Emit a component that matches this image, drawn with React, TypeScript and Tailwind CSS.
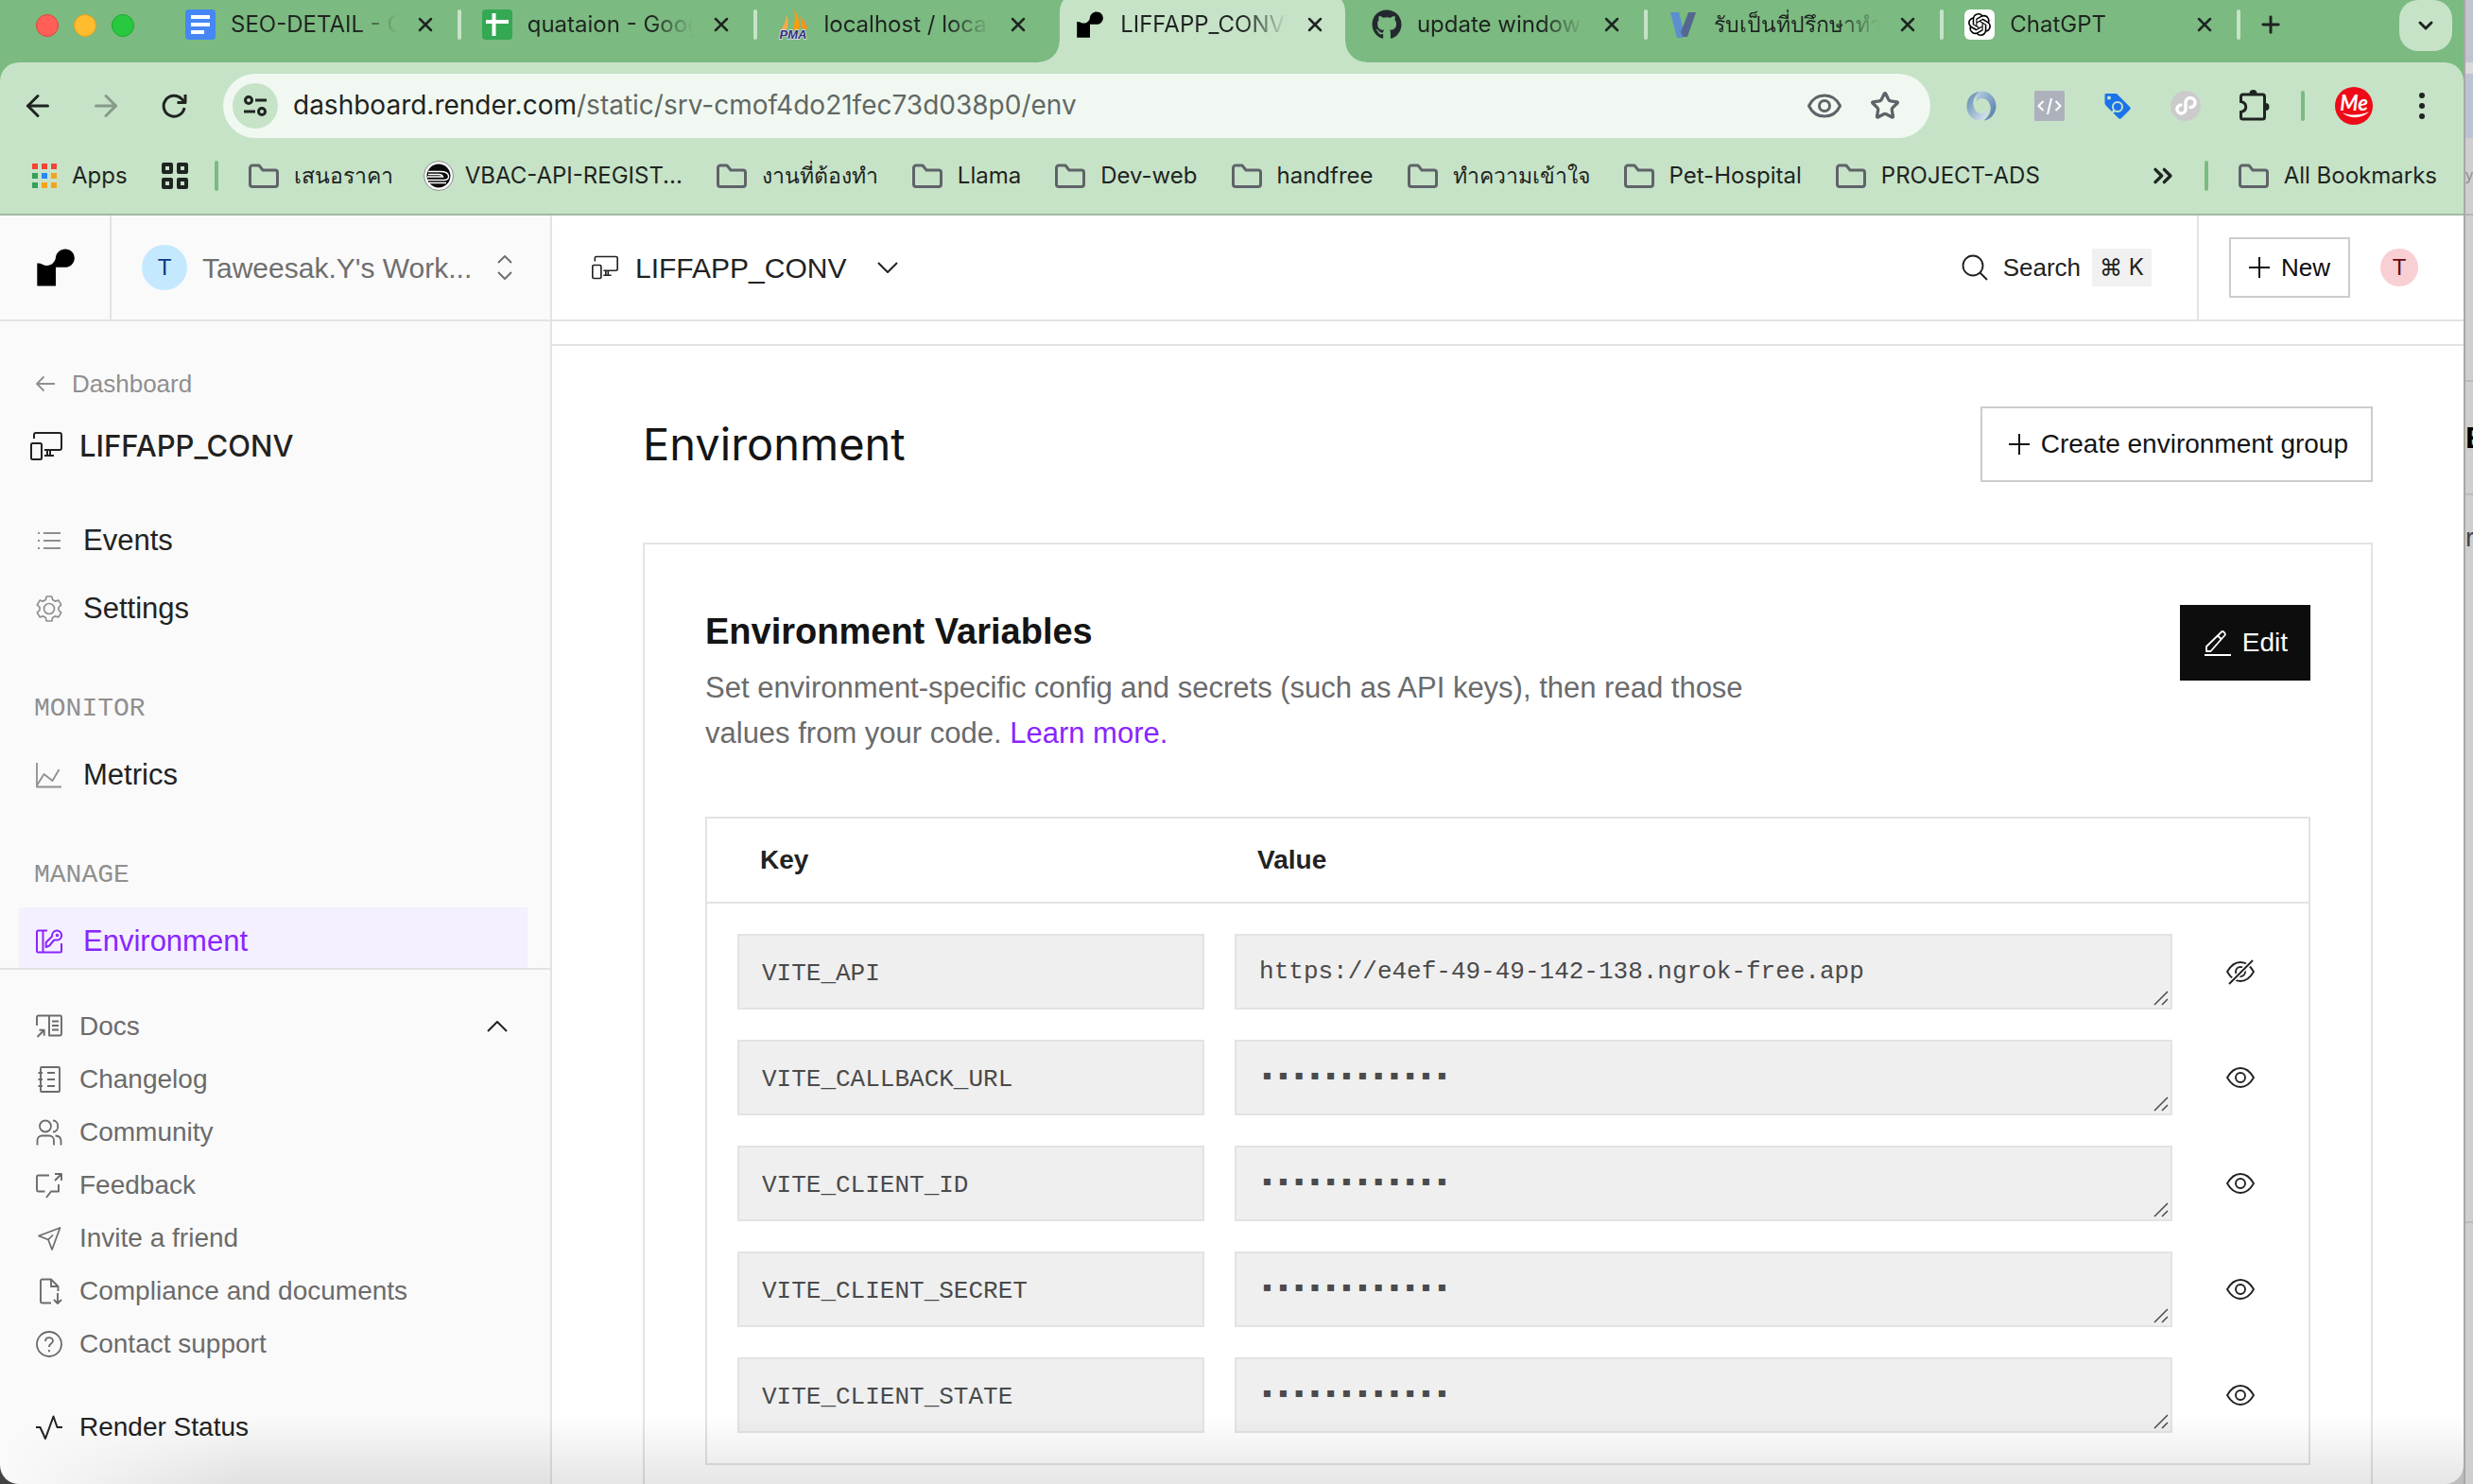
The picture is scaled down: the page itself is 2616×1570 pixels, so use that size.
import React from "react";
import {
  ArrowLeft,
  ArrowRight,
  ChevronDown,
  ChevronsRight,
  Plus,
  Star,
  X,
} from "lucide-react";
import { FaGithub } from "react-icons/fa";
import { SiOpenai } from "react-icons/si";

type IconProps = { className?: string };

function Line({
  className = "size-7",
  box = "0 0 24 24",
  width = 1.5,
  children,
}: {
  className?: string;
  box?: string;
  width?: number;
  children: React.ReactNode;
}) {
  return (
    <svg
      viewBox={box}
      className={className}
      fill="none"
      stroke="currentColor"
      strokeWidth={width}
      strokeLinejoin="round"
      aria-hidden="true"
    >
      {children}
    </svg>
  );
}

/* ---------- Browser icons ---------- */

function RenderLogo({ className }: IconProps) {
  return (
    <svg viewBox="0 0 40 40" className={className} fill="currentColor" aria-hidden="true">
      <path d="M30 0.6c-5.100 0-9.300 3.600-10 8.500-.1.400-.1.800-.2 1.200C19 14.700 15.200 18 10.600 18c-1.700 0-3.200-.4-4.600-1.200-1.500-.8-3.100-1.200-4.600-1.200H.3V39.500h19.700V19.800h9.800c5.600 0 10-4.500 10-9.900C39.800 4.700 35.400.6 30 .6z" />
    </svg>
  );
}

function DocsFavicon() {
  return (
    <svg viewBox="0 0 32 32" className="size-8 shrink-0" aria-hidden="true">
      <rect width="32" height="32" rx="4" fill="#4587f4" />
      <path d="M6 8h20M6 16h20M6 24h14" stroke="#fff" strokeWidth="4" />
    </svg>
  );
}

function SheetsFavicon() {
  return (
    <svg viewBox="0 0 32 32" className="size-8 shrink-0" aria-hidden="true">
      <rect width="32" height="32" rx="4" fill="#34a853" />
      <path d="M4 13h24M12.500 4v24" stroke="#fff" strokeWidth="4" />
    </svg>
  );
}

function PmaFavicon() {
  return (
    <svg viewBox="0 0 32 32" className="size-8 shrink-0" aria-hidden="true">
      <path d="M17 0c5 7 6 14 5.500 21l-7 1c2.500-7 3-14 1.500-22z" fill="#f89c0e" />
      <path d="M23 7c5 5 8 10 8 14l-7-1c1-5 .5-9-1-13z" fill="#f8931d" />
      <path d="M9 6c2.500 6 2 11 0 16l-7 1C6 18 8.500 12 9 6z" fill="#f9a94a" />
      <text
        x="16"
        y="31"
        textAnchor="middle"
        fontSize="13"
        fontWeight="700"
        fontStyle="italic"
        fontFamily="Liberation Sans, sans-serif"
        fill="#33307a"
        stroke="#dfe0ea"
        strokeWidth="1.500"
        paintOrder="stroke"
      >
        PMA
      </text>
    </svg>
  );
}

function VFavicon() {
  return (
    <svg viewBox="0 0 32 32" className="size-8 shrink-0" aria-hidden="true">
      <path d="M2 3h9l6 24-2 3H9z" fill="#5b8fd0" />
      <path d="M21 3h8l-9 26h-5l-2-5z" fill="#54688f" />
    </svg>
  );
}

function ChatFavicon() {
  return (
    <span className="flex size-8 shrink-0 items-center justify-center rounded-md bg-white">
      <SiOpenai className="size-6 text-black" />
    </span>
  );
}

function Folder() {
  return (
    <Line className="size-8 shrink-0 text-[#5f6368]" box="0 0 32 32" width={3}>
      <path d="M1.500 7.500a2.500 2.500 0 0 1 2.500-2.500h7l4 5h13a2.500 2.500 0 0 1 2.500 2.500v12.500a2.500 2.500 0 0 1-2.500 2.500H4a2.500 2.500 0 0 1-2.500-2.500z" />
    </Line>
  );
}

function ChromeEye() {
  return (
    <Line className="size-9 text-[#5f6368]" box="0 0 36 36" width={3}>
      <path d="M1.500 18C5 10.500 11 7 18 7s13 3.500 16.500 11C31 25.500 25 29 18 29S5 25.500 1.500 18z" />
      <circle cx="18" cy="18" r="5.500" />
    </Line>
  );
}

function AppsGrid() {
  const dots: [number, number, string][] = [
    [0, 0, "#f44336"], [10, 0, "#f44336"], [20, 0, "#f44336"],
    [0, 10, "#34a05a"], [10, 10, "#2a86f0"], [20, 10, "#f5a31a"],
    [0, 20, "#34a05a"], [10, 20, "#f5a31a"], [20, 20, "#f5a31a"],
  ];
  return (
    <svg viewBox="0 0 26 26" className="size-[26px] shrink-0" aria-hidden="true">
      {dots.map(([x, y, fill]) => (
        <rect key={`${x}-${y}`} x={x} y={y} width="6" height="6" fill={fill} />
      ))}
    </svg>
  );
}

function TrainIcon() {
  return (
    <svg viewBox="0 0 32 32" className="-mx-1 size-8 shrink-0" aria-hidden="true">
      <circle cx="16" cy="16" r="15.500" fill="#fff" stroke="#8a8a8a" />
      <circle cx="16" cy="16" r="12.500" fill="#0a0a0a" />
      <path d="M5 11.500h13c5 0 8 2 8.500 4.500S25 20.500 22 20.500H4M5 14.500h11c2.500 0 4 1 4.500 2.500H4M6 23.500h18" stroke="#fff" strokeWidth="1.400" fill="none" />
    </svg>
  );
}

function RingIcon() {
  return (
    <svg viewBox="0 0 32 32" className="size-8" aria-hidden="true">
      <defs>
        <linearGradient id="ringDark" x1="0" y1="0" x2="1" y2="1">
          <stop offset="0" stopColor="#b9d0e6" />
          <stop offset="1" stopColor="#4a76a2" />
        </linearGradient>
        <linearGradient id="ringLight" x1="0" y1="0" x2="1" y2="1">
          <stop offset="0" stopColor="#5c87ae" />
          <stop offset="1" stopColor="#dce8f4" />
        </linearGradient>
      </defs>
      <path d="M14 1c10-2 17.500 6 17.500 15 0 8-6 15-13 15.500 5-4 8-9 7-15-1-5-5-9-9.500-8.500-2 .3-4 1.500-5 4C10 7 11 3 14 1z" fill="url(#ringDark)" />
      <path d="M18 31C8 33.500.5 25.500.5 16.500.5 8 6 1.500 14 1 9 5 6.500 10 7.500 15.500c1 5.500 5 9 9.500 8.500 2-.3 4-1.500 5-4 0 5-1 9-4 11z" fill="url(#ringLight)" />
    </svg>
  );
}

function CodeIcon() {
  return (
    <svg viewBox="0 0 32 32" className="size-8" aria-hidden="true">
      <rect width="32" height="32" rx="1.500" fill="#adb1bc" />
      <path d="M9.500 11l-5 5 5 5M22.500 11l5 5-5 5M18 8l-4 17" stroke="#fff" strokeWidth="2" fill="none" />
    </svg>
  );
}

function TagIcon() {
  return (
    <svg viewBox="0 0 32 32" className="size-8" aria-hidden="true">
      <path d="M2.500 4.500c0-1 .5-1.500 1.500-1.500h11L29 17c1 1 1 2 0 3l-9 9c-1 1-2 1-3 0L3.500 15.500c-.7-.7-1-1.500-1-2.500z" fill="#1a73e8" />
      <circle cx="7" cy="7.500" r="2" fill="#c6e3c8" />
      <circle cx="16" cy="17" r="5" fill="none" stroke="#c6e3c8" strokeWidth="2" />
      <path d="M12.500 21l-3.500 3.500" stroke="#c6e3c8" strokeWidth="2.500" />
    </svg>
  );
}

function LoopIcon() {
  return (
    <svg viewBox="0 0 32 32" className="size-8" aria-hidden="true">
      <circle cx="16" cy="16" r="16" fill="#cbcbcb" />
      <path
        d="M11 15a4.500 4.500 0 1 0 5 4.500v-7a5 5 0 1 1 5 5"
        fill="none"
        stroke="#fff"
        strokeWidth="3.500"
        strokeLinecap="round"
      />
    </svg>
  );
}

function PuzzleIcon() {
  return (
    <svg viewBox="0 0 34 36" className="h-9 w-[34px] text-[#1f2421]" aria-hidden="true">
      <path
        d="M4.500 6h21a2 2 0 0 1 2 2v22a2 2 0 0 1-2 2h-21a2 2 0 0 1-2-2v-5.500c7-1.500 7-9.500 0-11V8a2 2 0 0 1 2-2z"
        fill="none"
        stroke="currentColor"
        strokeWidth="3"
      />
      <path d="M11.500 5a4 4 0 0 1 8 0zM28.500 15a4 4 0 0 1 0 8z" fill="currentColor" />
    </svg>
  );
}

function ProfileBadge() {
  return (
    <svg viewBox="0 0 40 40" className="size-10" aria-hidden="true">
      <circle cx="20" cy="20" r="20" fill="#ee0a17" />
      <text
        x="20"
        y="25"
        textAnchor="middle"
        fontSize="22"
        fontWeight="700"
        fontStyle="italic"
        fontFamily="Lato, sans-serif"
        fill="#fff"
      >
        Me
      </text>
      <path d="M8 27c6 7 21 7 28-1-7 4-20 5-28 1z" fill="#fff" />
    </svg>
  );
}

function TuneIcon() {
  return (
    <Line className="size-6 text-[#1f2421]" width={3}>
      <circle cx="5" cy="6" r="3.500" />
      <path d="M12 6h12M0 18h12" />
      <circle cx="19" cy="18" r="3.500" />
    </Line>
  );
}

function ReloadIcon() {
  return (
    <Line className="ml-1 size-7 text-[#1f2421]" box="0 0 28 28" width={3}>
      <path d="M25 16a11 11 0 1 1-3-9.500l4 4" />
      <path d="M26 2v8.500h-8.500" />
    </Line>
  );
}

/* ---------- Dashboard icons ---------- */

function StaticSite({ className }: IconProps) {
  return (
    <Line className={className} box="0 0 34 32" width={2}>
      <path d="M4 8V4a2 2 0 0 1 2-2h25a2 2 0 0 1 2 2v14a2 2 0 0 1-2 2H15" />
      <path d="M18 20v6M21 20v6M15 26h10" />
      <rect x="1" y="13" width="11" height="17" rx="1.500" />
    </Line>
  );
}

function EventsIcon() {
  return (
    <Line className="size-7" box="0 0 28 28" width={2}>
      <path d="M2 6h2M2 14h2M2 22h2M8 6h18M8 14h18M8 22h18" />
    </Line>
  );
}

function GearIcon() {
  return (
    <Line className="size-7" box="0 0 28 28" width={1.700}>
      <path d="M11.200 1h5.600l.9 3.600 2.600 1.500 3.600-1 2.800 4.800-2.700 2.600v3l2.700 2.600-2.800 4.800-3.600-1-2.600 1.500-.9 3.600h-5.600l-.9-3.600-2.600-1.500-3.600 1L1.300 18.100 4 15.500v-3L1.300 9.900l2.800-4.800 3.600 1 2.600-1.500z" />
      <circle cx="14" cy="14" r="5.500" />
    </Line>
  );
}

function MetricsIcon() {
  return (
    <Line className="size-7" box="0 0 28 28" width={1.800}>
      <path d="M1 1v25.500h26M1 25l7.500-12 9 7 7-12" />
    </Line>
  );
}

function EnvIcon() {
  return (
    <Line className="size-7" box="0 0 28 28" width={2}>
      <path d="M12 2.500H2.500a1.500 1.500 0 0 0-1.500 1.500v20a1.500 1.500 0 0 0 1.500 1.500h23a1.500 1.500 0 0 0 1.500-1.500v-8M7.500 2.500v23" />
      <path d="M17.200 8.500a5 5 0 1 1 4 4h-2l-5 6-3.500 1.500v-5l6.500-6.500z" />
      <circle cx="22.500" cy="7.500" r="0.800" />
    </Line>
  );
}

function DocsIcon() {
  return (
    <Line className="size-7" box="0 0 28 28" width={1.900}>
      <path d="M1 13V4a1.500 1.500 0 0 1 1.500-1.500h23A1.500 1.500 0 0 1 27 4v18a1.500 1.500 0 0 1-1.500 1.500H14v-21" />
      <path d="M17 8.500h7M17 13h7M17 17.500h7M1.500 25l7-7M3.500 17.800h5.200v6" />
    </Line>
  );
}

function ChangelogIcon() {
  return (
    <Line className="size-7" box="0 0 28 28" width={1.900}>
      <rect x="5" y="1" width="20" height="26" rx="1" />
      <path d="M2.500 7H7M2.500 14H7M2.500 21H7M12 7h8M12 14h8M12 21h8" />
    </Line>
  );
}

function CommunityIcon() {
  return (
    <Line className="size-7" box="0 0 28 28" width={1.800}>
      <circle cx="10" cy="7.500" r="6" />
      <path d="M1.500 27.500v-5a5 5 0 0 1 5-5h7.500a5 5 0 0 1 5 5v5M18 1.500c7 0 7 12 0 12M20.500 17.500c4 .3 6 2.500 6 5.500v4.500" />
    </Line>
  );
}

function FeedbackIcon() {
  return (
    <Line className="size-7" box="0 0 28 28" width={1.900}>
      <path d="M14 3.500H2.500A1.500 1.500 0 0 0 1 5v14a1.500 1.500 0 0 0 1.500 1.500h7M24 13v7.500h-8l-5 6.500M20 9l7-7M20 2h7v7" />
    </Line>
  );
}

function InviteIcon() {
  return (
    <Line className="size-7" box="0 0 28 28" width={1.700}>
      <path d="M3 11.500L25.500 3 17 26l-4-10.500zM13 15.500l5-5" />
    </Line>
  );
}

function ComplianceIcon() {
  return (
    <Line className="size-7" box="0 0 28 28" width={1.900}>
      <path d="M16 26.500H6.500A1.500 1.500 0 0 1 5 25V3a1.500 1.500 0 0 1 1.500-1.500H16l7.500 7.500v5M16 1.500V9h7.500M23 16v10.500M19 23l4 4 4-4" />
    </Line>
  );
}

function SupportIcon() {
  return (
    <Line className="size-7" box="0 0 28 28" width={1.800}>
      <circle cx="14" cy="14" r="13" />
      <path d="M10 11c0-5 8-5 8-.5 0 3-4 2.500-4 6.500M14 20v2.200" />
    </Line>
  );
}

function StatusIcon() {
  return (
    <Line className="size-7" box="0 0 28 28" width={2}>
      <path d="M0 14h4.500l5.500 12 8.500-23.500L22.500 14H28" />
    </Line>
  );
}

function SearchIcon() {
  return (
    <Line className="size-7" box="0 0 28 28" width={1.900}>
      <circle cx="12" cy="12" r="10.500" />
      <path d="M19.500 19.500l7.500 7.500" />
    </Line>
  );
}

function PencilIcon() {
  return (
    <Line className="size-7" box="0 0 28 28" width={1.800}>
      <path d="M0 27h28M2 23v-5L18 2.500c1.500-1.500 5 2 3.500 3.500L6.500 23zM14 6.500l4 4" />
    </Line>
  );
}

function EyeIcon({ crossed = false }: { crossed?: boolean }) {
  return (
    <Line className="size-[30px] text-[#222]" box="0 0 30 30" width={1.900}>
      <path d="M1 15C5 8 9.500 5 15 5s10 3 14 10c-4 7-8.500 10-14 10S5 22 1 15z" />
      <circle cx="15" cy="15" r="5" />
      {crossed && (
        <>
          <path d="M4 27L28 3" stroke="#fff" strokeWidth="5" />
          <path d="M3 28L28 3" />
        </>
      )}
    </Line>
  );
}

function PlusIcon() {
  return (
    <Line className="size-[22px]" box="0 0 22 22" width={2}>
      <path d="M11 0v22M0 11h22" />
    </Line>
  );
}

/* ---------- Browser chrome ---------- */

const tabs: { title: string; icon: React.ReactNode; active?: boolean; bar: boolean; thai?: boolean }[] = [
  { title: "SEO-DETAIL - Google", icon: <DocsFavicon />, bar: true },
  { title: "quataion - Google Sheets", icon: <SheetsFavicon />, bar: true },
  { title: "localhost / localhost", icon: <PmaFavicon />, bar: false },
  { title: "LIFFAPP_CONV · Env", icon: <RenderLogo className="size-7 shrink-0 text-black" />, active: true, bar: false },
  { title: "update windows · repo", icon: <FaGithub className="size-8 shrink-0 text-[#24292f]" />, bar: true },
  { title: "รับเป็นที่ปรึกษาทำวิจัย", icon: <VFavicon />, bar: true, thai: true },
  { title: "ChatGPT", icon: <ChatFavicon />, bar: true },
];

function TabStrip() {
  return (
    <div className="flex h-[66px] bg-[#7bba80]">
      <div className="flex h-[54px] w-[174px] shrink-0 items-center gap-4 pl-[38px]">
        <span className="size-6 rounded-full border border-[#e0443e] bg-[#ff5f57]" />
        <span className="size-6 rounded-full border border-[#dea123] bg-[#febc2e]" />
        <span className="size-6 rounded-full border border-[#1aab29] bg-[#28c840]" />
      </div>
      <div role="tablist" className="flex min-w-0 flex-1">
        {tabs.map((tab) => (
          <div
            key={tab.title}
            role="tab"
            aria-selected={!!tab.active}
            className="relative flex min-w-0 flex-1 items-start"
          >
            {tab.active && (
              <>
                <span className="absolute inset-x-1.5 -top-2 bottom-0 rounded-t-[20px] bg-[#c6e3c8]" />
                <span className="absolute bottom-0 -left-4 size-[22px] bg-[radial-gradient(circle_at_top_left,#7bba80_21px,#c6e3c8_22px)]" />
                <span className="absolute -right-4 bottom-0 size-[22px] bg-[radial-gradient(circle_at_top_right,#7bba80_21px,#c6e3c8_22px)]" />
              </>
            )}
            <div className="relative flex h-[52px] min-w-0 flex-1 items-center pl-[22px]">
              <span className="flex w-8 shrink-0 justify-center">{tab.icon}</span>
              <span
                className={
                  tab.thai
                    ? "ml-4 min-w-0 flex-1 overflow-hidden mask-r-from-75% mask-r-to-100% text-[23px] leading-10 whitespace-nowrap text-[#1f2421]"
                    : "ml-4 min-w-0 flex-1 overflow-hidden mask-r-from-75% mask-r-to-100% leading-10 whitespace-nowrap text-[#1f2421]"
                }
              >
                {tab.title}
              </span>
              <button aria-label="Close tab" className="mr-[22px] ml-[18px] text-[#1f2421]">
                <X className="size-6" strokeWidth={2.500} />
              </button>
              <span className={tab.bar ? "h-8 w-1 rounded-sm bg-[#c6e3c8]" : "h-8 w-1"} />
            </div>
          </div>
        ))}
      </div>
      <div className="flex w-[236px] shrink-0 items-start justify-between pr-3 pl-[18px]">
        <button aria-label="New tab" className="flex h-[52px] items-center text-[#1f2421]">
          <Plus className="size-7" strokeWidth={2.500} />
        </button>
        <button aria-label="Search tabs" className="flex h-[54px] w-14 items-center justify-center rounded-[20px] bg-[#c6e3c8] text-[#1f2421]">
          <ChevronDown className="size-6" strokeWidth={3} />
        </button>
      </div>
    </div>
  );
}

function Toolbar() {
  return (
    <div className="bg-[#7bba80]">
      <div className="flex h-[92px] items-center rounded-t-[20px] bg-[#c6e3c8] pr-7 pl-[22px] text-[#1f2421]">
        <div className="flex w-[214px] shrink-0 items-center gap-9">
          <button aria-label="Back"><ArrowLeft className="size-9" strokeWidth={2} /></button>
          <button aria-label="Forward" className="text-[#87998a]"><ArrowRight className="size-9" strokeWidth={2} /></button>
          <button aria-label="Reload"><ReloadIcon /></button>
        </div>
        <div className="flex h-[68px] min-w-0 flex-1 items-center rounded-full bg-[#f1f8f1] pr-8 pl-2.5">
          <button aria-label="Site information" className="flex size-12 shrink-0 items-center justify-center rounded-full bg-[#c6e3c8]">
            <TuneIcon />
          </button>
          <div className="ml-4 flex-1 text-[28px] text-[#616864]">
            <span className="text-[#1f2421]">dashboard.render.com</span>/static/srv-cmof4do21fec73d038p0/env
          </div>
          <button aria-label="View" className="mr-[30px]"><ChromeEye /></button>
          <button aria-label="Bookmark" className="text-[#5f6368]"><Star className="size-8" strokeWidth={2.500} /></button>
        </div>
        <div className="ml-[38px] flex shrink-0 items-center gap-10">
          <button aria-label="JSON viewer"><RingIcon /></button>
          <button aria-label="Code"><CodeIcon /></button>
          <button aria-label="Tag assistant"><TagIcon /></button>
          <button aria-label="Loop"><LoopIcon /></button>
          <button aria-label="Extensions"><PuzzleIcon /></button>
        </div>
        <span className="mx-8 h-8 w-1 shrink-0 rounded-sm bg-[#7bba80]" />
        <button aria-label="Profile" className="shrink-0"><ProfileBadge /></button>
        <button aria-label="Menu" className="ml-9 shrink-0">
          <svg viewBox="0 0 32 32" className="size-8" fill="currentColor" aria-hidden="true">
            <circle cx="16" cy="5" r="3" />
            <circle cx="16" cy="16" r="3" />
            <circle cx="16" cy="27" r="3" />
          </svg>
        </button>
      </div>
    </div>
  );
}

const bookmarks: { label: string; icon?: React.ReactNode; thai?: boolean }[] = [
  { label: "เสนอราคา", thai: true },
  { label: "VBAC-API-REGIST...", icon: <TrainIcon /> },
  { label: "งานที่ต้องทำ", thai: true },
  { label: "Llama" },
  { label: "Dev-web" },
  { label: "handfree" },
  { label: "ทำความเข้าใจ", thai: true },
  { label: "Pet-Hospital" },
  { label: "PROJECT-ADS" },
];

function BookmarksBar() {
  return (
    <div className="flex h-[70px] items-center border-b-2 border-[#a0b8a3] bg-[#c6e3c8] pr-7 pb-3 pl-[34px] text-[#1f2421]">
      <a href="#apps" className="flex items-center gap-4"><AppsGrid />Apps</a>
      <button aria-label="Tab groups" className="ml-9">
        <Line className="size-7" box="0 0 28 28" width={4}>
          <path d="M2 2h8v8H2zM18 2h8v8h-8zM2 18h8v8H2zM18 18h8v8h-8z" />
        </Line>
      </button>
      <span className="mr-8 ml-7 h-8 w-1 shrink-0 rounded-sm bg-[#7bba80]" />
      <nav className="flex min-w-0 flex-1 items-center gap-9 whitespace-nowrap">
        {bookmarks.map((b) => (
          <a key={b.label} href="#bookmark" className="flex items-center gap-4">
            {b.icon ?? <Folder />}
            <span className={b.thai ? "text-[23px]" : ""}>{b.label}</span>
          </a>
        ))}
      </nav>
      <button aria-label="More bookmarks"><ChevronsRight className="size-8" strokeWidth={2.500} /></button>
      <span className="mr-8 ml-7 h-8 w-1 shrink-0 rounded-sm bg-[#7bba80]" />
      <a href="#all" className="flex items-center gap-4 whitespace-nowrap"><Folder />All Bookmarks</a>
    </div>
  );
}

/* ---------- Dashboard ---------- */

function Sidebar() {
  return (
    <aside className="flex w-[584px] shrink-0 flex-col border-r-2 border-[#e3e3e3] bg-[#fafafa]">
      <div className="flex h-28 shrink-0 border-b-2 border-[#e3e3e3]">
        <a href="#home" aria-label="Render" className="flex w-[118px] items-center justify-center border-r-2 border-[#e3e3e3] pl-0.5">
          <RenderLogo className="size-10 text-black" />
        </a>
        <button className="flex flex-1 items-center pr-9 pl-8 text-left text-[#6f6f6f]">
          <span className="flex size-12 items-center justify-center rounded-full bg-[#c4e9ff] text-2xl text-[#073a80]">T</span>
          <span className="ml-4 flex-1 text-[30px]">Taweesak.Y's Work...</span>
          <Line className="h-7 w-6" box="0 0 24 28" width={2}>
            <path d="M5 9l7-7 7 7M5 19l7 7 7-7" />
          </Line>
        </button>
      </div>

      <nav className="min-h-0 flex-1 overflow-hidden pt-10 pr-6 pl-5">
        <a href="#dashboard" className="flex h-[52px] items-center pl-4 text-[26px] text-[#8f8f8f]">
          <Line className="size-6" width={1.800}>
            <path d="M22 12H3M10.500 4.500L3 12l7.500 7.500" />
          </Line>
          <span className="ml-4">Dashboard</span>
        </a>
        <div className="flex h-20 items-center pl-3 font-[Inter] text-[31px] font-medium text-[#222]">
          <StaticSite className="h-8 w-[34px]" />
          <span className="ml-[18px]">LIFFAPP_CONV</span>
        </div>
        <ul className="mt-6">
          <NavItem icon={<EventsIcon />} label="Events" />
          <NavItem icon={<GearIcon />} label="Settings" />
        </ul>
        <NavHeading>MONITOR</NavHeading>
        <ul><NavItem icon={<MetricsIcon />} label="Metrics" /></ul>
        <NavHeading>MANAGE</NavHeading>
        <ul><NavItem icon={<EnvIcon />} label="Environment" active /></ul>
      </nav>

      <nav className="shrink-0 border-t-2 border-[#e3e3e3] py-8 text-[28px] text-[#6b6b6b]">
        <ul>
          {footerLinks.map((item) => (
            <li key={item.label} className="flex h-14 items-center pr-11 pl-[38px]">
              <a href="#link" className="flex flex-1 items-center gap-[18px]">
                {item.icon}
                {item.label}
              </a>
              {item.label === "Docs" && (
                <button aria-label="Collapse" className="text-[#222]">
                  <Line className="size-6" width={2}><path d="M2 17L12 7l10 10" /></Line>
                </button>
              )}
            </li>
          ))}
        </ul>
        <a href="#status" className="mt-8 flex h-14 items-center gap-[18px] pl-[38px] text-[#222]">
          <StatusIcon />
          Render Status
        </a>
      </nav>
    </aside>
  );
}

const footerLinks = [
  { label: "Docs", icon: <DocsIcon /> },
  { label: "Changelog", icon: <ChangelogIcon /> },
  { label: "Community", icon: <CommunityIcon /> },
  { label: "Feedback", icon: <FeedbackIcon /> },
  { label: "Invite a friend", icon: <InviteIcon /> },
  { label: "Compliance and documents", icon: <ComplianceIcon /> },
  { label: "Contact support", icon: <SupportIcon /> },
];

function NavHeading({ children }: { children: React.ReactNode }) {
  return (
    <h3 className="mt-8 flex h-[72px] items-center pt-1 pl-4 font-['Liberation_Mono',monospace] text-[28px] text-[#8f8f8f]">
      {children}
    </h3>
  );
}

function NavItem({ icon, label, active = false }: { icon: React.ReactNode; label: string; active?: boolean }) {
  return (
    <li>
      <a
        href="#nav"
        className={
          active
            ? "flex h-[72px] items-center gap-[22px] bg-[#f4f0ff] pl-[18px] text-[31px] text-[#8a24ff]"
            : "flex h-[72px] items-center gap-[22px] pl-[18px] text-[31px] text-[#222]"
        }
      >
        <span className={active ? "" : "text-[#8f8f8f]"}>{icon}</span>
        {label}
      </a>
    </li>
  );
}

function Header() {
  return (
    <header className="flex h-28 shrink-0 items-center border-b-2 border-[#e3e3e3] text-[26px] text-[#222]">
      <button className="ml-[42px] flex items-center text-[30px]">
        <StaticSite className="h-7 w-7" />
        <span className="ml-[18px]">LIFFAPP_CONV</span>
        <Line className="ml-8 size-6" width={2}><path d="M2 7l10 10L22 7" /></Line>
      </button>
      <button className="mr-12 ml-auto flex items-center">
        <SearchIcon />
        <span className="ml-4">Search</span>
        <kbd className="ml-3 flex h-10 items-center bg-[#f1f1f1] px-2 font-[Inter,'DejaVu_Sans'] text-2xl">⌘ K</kbd>
      </button>
      <div className="flex h-full items-center gap-8 border-l-2 border-[#e3e3e3] pr-12 pl-8">
        <button className="flex h-16 w-32 items-center justify-center gap-3 border-2 border-[#ccc] text-[#0d0d0d]">
          <PlusIcon />
          New
        </button>
        <button aria-label="Account" className="flex size-10 items-center justify-center rounded-full bg-[#f8cfd3] text-2xl text-[#6b0a12]">T</button>
      </div>
    </header>
  );
}

const mask = "▪▪▪▪▪▪▪▪▪▪▪▪";
const rows = [
  { key: "VITE_API", value: "https://e4ef-49-49-142-138.ngrok-free.app", shown: true },
  { key: "VITE_CALLBACK_URL", value: mask, shown: false },
  { key: "VITE_CLIENT_ID", value: mask, shown: false },
  { key: "VITE_CLIENT_SECRET", value: mask, shown: false },
  { key: "VITE_CLIENT_STATE", value: mask, shown: false },
];

function VariablesTable() {
  return (
    <table className="mt-16 w-full table-fixed border-separate border-spacing-0 border-2 border-[#e3e3e3]">
      <thead>
        <tr className="text-left text-[28px] text-[#222]">
          <th className="h-[90px] w-[32%] border-b-2 border-[#e3e3e3] pl-14">Key</th>
          <th className="border-b-2 border-[#e3e3e3] pl-10">Value</th>
          <th aria-label="Visibility" className="w-36 border-b-2 border-[#e3e3e3]" />
        </tr>
      </thead>
      <tbody className="[&>tr:last-child>td]:pb-8">
        {rows.map((row) => (
          <tr key={row.key}>
            <td className="pt-8 pr-4 pl-8">
              <input
                readOnly
                aria-label={`Key ${row.key}`}
                value={row.key}
                className="block h-20 w-full border-2 border-[#e3e3e3] bg-[#efefef] px-6 pt-1 font-['Liberation_Mono',monospace] text-[26px] text-[#4a4a4a]"
              />
            </td>
            <td className="pt-8 pl-4">
              <div className="relative">
                <textarea
                  readOnly
                  rows={1}
                  aria-label={`Value of ${row.key}`}
                  value={row.value}
                  className={
                    row.shown
                      ? "block h-20 w-full resize-none overflow-hidden border-2 border-[#e3e3e3] bg-[#efefef] px-6 pt-[18px] font-['Liberation_Mono',monospace] text-[26px] leading-10 text-[#4a4a4a]"
                      : "block h-20 w-full resize-none overflow-hidden border-2 border-[#e3e3e3] bg-[#efefef] px-6 pt-[18px] font-['Liberation_Mono',monospace] text-[28px] leading-10 text-[#4a4a4a]"
                  }
                />
                <Line className="absolute right-1 bottom-1 size-4 text-[#4a4a4a]" box="0 0 16 16" width={1.500}>
                  <path d="M1 15L15 1M9 15l6-6" />
                </Line>
              </div>
            </td>
            <td className="pt-8">
              <div className="flex h-20 items-center justify-center">
                <button aria-label={row.shown ? "Hide value" : "Show value"}>
                  <EyeIcon crossed={row.shown} />
                </button>
              </div>
            </td>
          </tr>
        ))}
      </tbody>
    </table>
  );
}

function Main() {
  return (
    <main className="flex min-w-0 flex-1 flex-col bg-white">
      <Header />
      <div className="h-[26px] shrink-0 border-b-2 border-[#e3e3e3]" />
      <div className="min-h-0 flex-1 overflow-hidden px-24 pt-16">
        <div className="flex h-20 items-center justify-between">
          <h1 className="font-[Inter] text-[47px] text-[#141414]">Environment</h1>
          <button className="flex h-20 items-center gap-3 border-2 border-[#ccc] px-6 text-[28px] text-[#141414]">
            <span className="ml-1"><PlusIcon /></span>
            Create environment group
          </button>
        </div>
        <section className="mt-16 border-2 border-[#e3e3e3] p-16">
          <div className="flex items-start justify-between">
            <div>
              <h2 className="text-[38px] leading-14 font-bold text-[#141414]">Environment Variables</h2>
              <p className="mt-2 max-w-[1140px] text-[31px] leading-12 text-[#6b6b6b]">
                Set environment-specific config and secrets (such as API keys), then read those values from your code.{" "}
                <a href="#learn" className="text-[#8a24ff]">Learn more.</a>
              </p>
            </div>
            <button className="flex h-20 items-center gap-3 bg-[#0d0d0d] pr-6 pl-[26px] text-[28px] text-white">
              <PencilIcon />
              Edit
            </button>
          </div>
          <VariablesTable />
        </section>
      </div>
    </main>
  );
}

function WindowBehind() {
  return (
    <div aria-hidden="true" className="flex w-2.5 shrink-0 flex-col overflow-hidden border-l-2 border-[#a8a8a8] bg-[#cfcfcf]">
      <div className="h-[66px] shrink-0 bg-[#bfc5ce]" />
      <div className="h-3 shrink-0 bg-[#dadada]" />
      <div className="h-[68px] shrink-0 bg-[#bcc3d2]" />
      <div className="flex h-[82px] shrink-0 items-center border-b-2 border-[#b4b4b4] text-[#8c8c8c]">y</div>
      <div className="h-[176px] shrink-0 border-b-2 border-[#bababa]" />
      <div className="flex h-[120px] shrink-0 items-center border-b-2 border-[#bababa] text-[32px] font-bold text-black">E</div>
      <div className="flex h-[90px] shrink-0 items-center text-[28px] text-[#3c4550]">re</div>
      <div className="h-[680px] shrink-0 border-b-2 border-[#bababa]" />
    </div>
  );
}

export default function App() {
  return (
    <div className="flex h-screen overflow-hidden bg-linear-to-r from-[#444] from-50% to-[#bdbdbd] to-50% font-['Liberation_Sans',Arial,sans-serif]">
      <div className="relative flex min-w-0 flex-1 flex-col overflow-hidden rounded-b-[20px]">
        <div className="shrink-0 font-[Inter,'Noto_Sans',sans-serif] text-2xl">
          <TabStrip />
          <Toolbar />
          <BookmarksBar />
        </div>
        <div className="flex min-h-0 flex-1">
          <Sidebar />
          <Main />
        </div>
        <div className="pointer-events-none absolute inset-x-0 bottom-0 h-[72px] bg-linear-to-b from-transparent to-black/10 mask-l-from-90% mask-l-to-100%" />
      </div>
      <WindowBehind />
    </div>
  );
}
